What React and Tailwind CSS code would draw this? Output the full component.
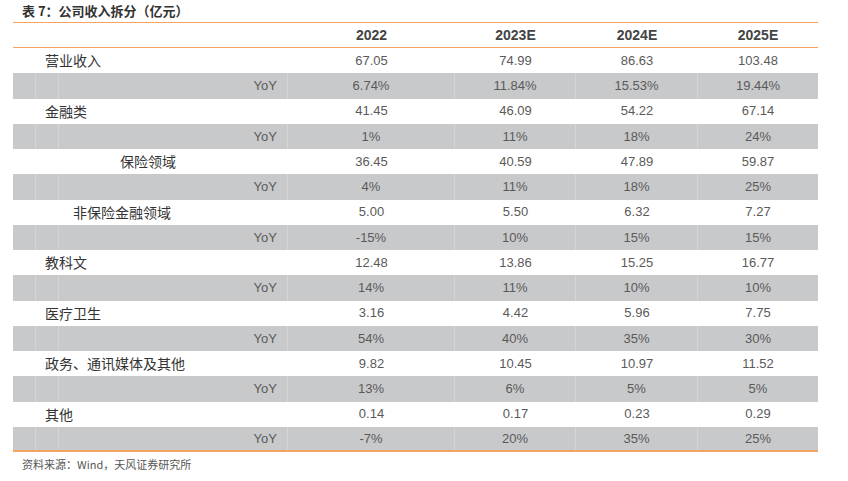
const years = ["2022", "2023E", "2024E", "2025E"];

const rows = [
  { label: "营业收入", indent: "pl-[32px]", values: ["67.05", "74.99", "86.63", "103.48"], yoy: ["6.74%", "11.84%", "15.53%", "19.44%"] },
  { label: "金融类", indent: "pl-[32px]", values: ["41.45", "46.09", "54.22", "67.14"], yoy: ["1%", "11%", "18%", "24%"] },
  { label: "保险领域", indent: "pl-[107px]", values: ["36.45", "40.59", "47.89", "59.87"], yoy: ["4%", "11%", "18%", "25%"] },
  { label: "非保险金融领域", indent: "pl-[60px]", values: ["5.00", "5.50", "6.32", "7.27"], yoy: ["-15%", "10%", "15%", "15%"] },
  { label: "教科文", indent: "pl-[32px]", values: ["12.48", "13.86", "15.25", "16.77"], yoy: ["14%", "11%", "10%", "10%"] },
  { label: "医疗卫生", indent: "pl-[32px]", values: ["3.16", "4.42", "5.96", "7.75"], yoy: ["54%", "40%", "35%", "30%"] },
  { label: "政务、通讯媒体及其他", indent: "pl-[32px]", values: ["9.82", "10.45", "10.97", "11.52"], yoy: ["13%", "6%", "5%", "5%"] },
  { label: "其他", indent: "pl-[32px]", values: ["0.14", "0.17", "0.23", "0.29"], yoy: ["-7%", "20%", "35%", "25%"] },
];

const colW = ["w-[167px]", "w-[121px]", "w-[122px]", "w-[120px]"];

const cjk = { fontFamily: '"Noto Sans CJK SC", "Liberation Sans", sans-serif' };
const num = { fontFamily: '"Liberation Sans", "Noto Sans CJK SC", sans-serif' };

const App = () => {
  return (
    <div className="w-[848px] h-[481px] bg-white text-[#5a5a5a]" style={cjk}>
      {/* Title */}
      <div className="h-[22px] pl-[22px] flex items-center text-[13px] font-bold text-[#333]">
        表 7：公司收入拆分（亿元）
      </div>

      <div className="ml-[13px] w-[805px]">
        {/* Header */}
        <div className="h-[26px] flex border-t border-b border-[#f4a460]">
          <div className="w-[275px]" />
          {years.map((y, i) => (
            <div key={y} className={`${colW[i]} flex items-center justify-center text-[14px] font-bold text-[#444]`} style={num}>
              {y}
            </div>
          ))}
        </div>

        {rows.map((row, idx) => (
          <div key={row.label}>
            {/* Value row */}
            <div className="h-[25.25px] flex items-center">
              <div className={`w-[275px] ${row.indent} text-[14px] text-[#333]`}>{row.label}</div>
              {row.values.map((v, i) => (
                <div key={i} className={`${colW[i]} text-center text-[13px]`} style={num}>
                  {v}
                </div>
              ))}
            </div>

            {/* YoY row */}
            <div className={`h-[25.25px] flex bg-[#c8c9cb] ${idx === rows.length - 1 ? "border-b-2 border-[#f4a460]" : ""}`}>
              <div className="w-[23px] border-r border-[#d4d5d6]" />
              <div className="w-[23px] border-r border-[#d4d5d6]" />
              <div className="w-[229px] flex items-center justify-end pr-[10px] text-[13px] border-r border-[#d4d5d6]" style={num}>
                YoY
              </div>
              {row.yoy.map((v, i) => (
                <div
                  key={i}
                  className={`${colW[i]} flex items-center justify-center text-[13px] ${i < 3 ? "border-r border-[#d4d5d6]" : ""}`}
                  style={num}
                >
                  {v}
                </div>
              ))}
            </div>
          </div>
        ))}
      </div>

      {/* Source */}
      <div className="pl-[22px] mt-[4px] text-[11px] text-[#555]">资料来源：Wind，天风证券研究所</div>
    </div>
  );
};

export default App;
